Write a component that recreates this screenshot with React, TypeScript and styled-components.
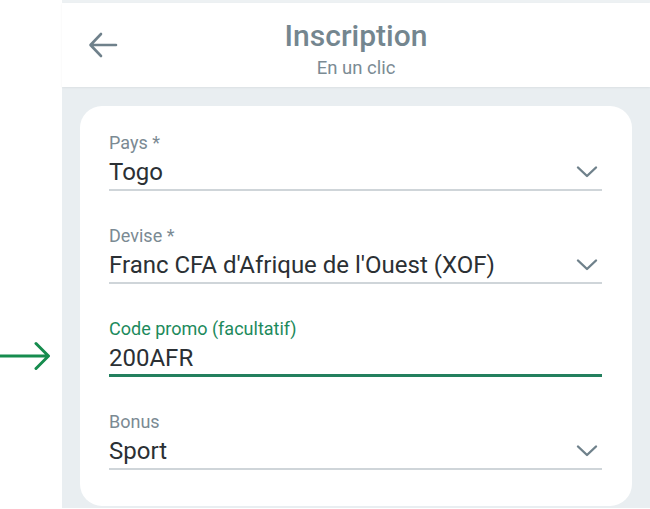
import styled, { createGlobalStyle } from "styled-components";

const GlobalStyle = createGlobalStyle`
  html, body {
    margin: 0;
    padding: 0;
    background: #ffffff;
    font-family: Roboto, "Noto Sans", sans-serif;
  }
`;

interface FieldData {
  label: string;
  value: string;
  select?: boolean;
  active?: boolean;
}

const fields: FieldData[] = [
  { label: "Pays *", value: "Togo", select: true },
  { label: "Devise *", value: "Franc CFA d'Afrique de l'Ouest (XOF)", select: true },
  { label: "Code promo (facultatif)", value: "200AFR", active: true },
  { label: "Bonus", value: "Sport", select: true },
];

const Chevron = () => (
  <svg width="22" height="14" viewBox="0 0 22 14" fill="none">
    <path d="M2 2.5 L11 11 L20 2.5" stroke="#6f818b" strokeWidth="2.4" strokeLinecap="round" strokeLinejoin="round" />
  </svg>
);

const BackArrow = () => (
  <svg width="30" height="26" viewBox="0 0 30 26" fill="none">
    <path d="M28 13 H3 M13 2 L2.5 13 L13 24" stroke="#6f818b" strokeWidth="2.6" strokeLinecap="round" strokeLinejoin="round" />
  </svg>
);

const PointerArrow = () => (
  <svg width="52" height="32" viewBox="0 0 52 32" fill="none">
    <path d="M0 16 H48 M36 3.5 L48.5 16 L36 28.5" stroke="#168c4e" strokeWidth="3" strokeLinecap="round" strokeLinejoin="round" />
  </svg>
);

const App = () => {
  return (
    <>
      <GlobalStyle />
      <Page>
        <Gutter>
          <PointerArrow />
        </Gutter>
        <Screen>
          <Header>
            <BackButton>
              <BackArrow />
            </BackButton>
            <Title>{"Inscription"}</Title>
            <Subtitle>{"En un clic"}</Subtitle>
          </Header>
          <Body>
            <Card>
              {fields.map((f, i) => (
                <Field key={i}>
                  <Label $active={!!f.active}>{f.label}</Label>
                  <InputRow $active={!!f.active}>
                    <Value>{f.value}</Value>
                    {f.select && <Chevron />}
                  </InputRow>
                </Field>
              ))}
            </Card>
          </Body>
        </Screen>
      </Page>
    </>
  );
};

export default App;

const Page = styled.div`
  display: flex;
  width: 650px;
  height: 509px;
  overflow: hidden;
`;

const Gutter = styled.div`
  width: 62px;
  flex-shrink: 0;
  display: flex;
  align-items: flex-start;
  padding-top: 340px;
  box-sizing: border-box;
`;

const Screen = styled.div`
  flex: 1;
  display: flex;
  flex-direction: column;
  border-top: 3px solid #edf1f3;
  height: 505px;
`;

const Header = styled.div`
  position: relative;
  height: 84px;
  background: #ffffff;
  display: flex;
  flex-direction: column;
  align-items: center;
  box-shadow: 0 1px 2px rgba(0, 0, 0, 0.06);
`;

const BackButton = styled.div`
  position: absolute;
  left: 26px;
  top: 29px;
  display: flex;
`;

const Title = styled.div`
  margin-top: 15px;
  font-size: 30px;
  font-weight: 500;
  color: #74868f;
  line-height: 36px;
`;

const Subtitle = styled.div`
  margin-top: 3px;
  font-size: 18.5px;
  color: #7b8b94;
  line-height: 22px;
`;

const Body = styled.div`
  flex: 1;
  background: #e9eef1;
  padding: 19px 18px 2px 18px;
  display: flex;
`;

const Card = styled.div`
  flex: 1;
  background: #ffffff;
  border-radius: 22px;
  padding: 26px 30px 0 29px;
  display: flex;
  flex-direction: column;
  gap: 34px;
`;

const Field = styled.div`
  display: flex;
  flex-direction: column;
`;

const Label = styled.div<{ $active: boolean }>`
  font-size: 18px;
  line-height: 21px;
  color: ${({ $active }) => ($active ? "#1d8a5c" : "#7b8a93")};
`;

const InputRow = styled.div<{ $active: boolean }>`
  display: flex;
  align-items: center;
  justify-content: space-between;
  height: 38px;
  padding-right: 4px;
  padding-top: 2px;
  border-bottom: ${({ $active }) => ($active ? "3px solid #23805e" : "2px solid #cfd5d9")};
  box-sizing: border-box;
`;

const Value = styled.div`
  font-size: 24px;
  color: #2b3034;
  line-height: 28px;
`;
